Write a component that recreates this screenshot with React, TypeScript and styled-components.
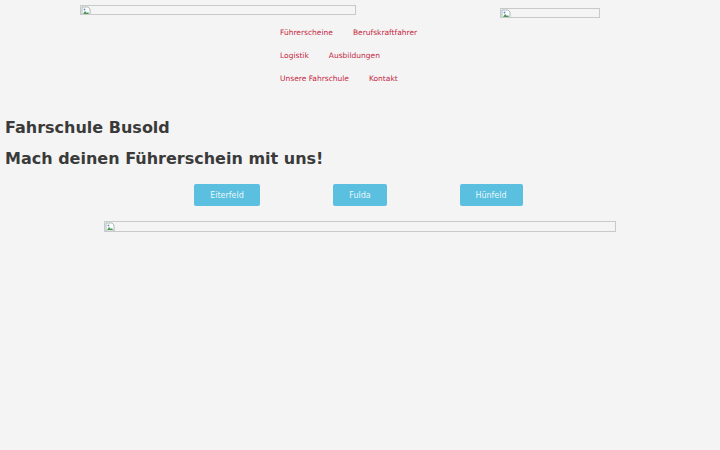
import React from "react";
import styled, { createGlobalStyle } from "styled-components";

const GlobalStyle = createGlobalStyle`
  html, body {
    margin: 0;
    padding: 0;
    background: #f4f4f4;
    font-family: "DejaVu Sans", Verdana, sans-serif;
  }
`;

const Header = styled.header`
  display: grid;
  grid-template-columns: 200px 220px 140px;
  padding-left: 80px;
`;

const LogoCell = styled.div`
  padding-top: 5px;
`;

const SideCell = styled.div`
  padding-top: 8px;
`;

const Placeholder = styled.span<{ w: number; h: number }>`
  display: flex;
  align-items: flex-start;
  box-sizing: border-box;
  width: ${(p) => p.w}px;
  height: ${(p) => p.h}px;
  border: 1px solid #c9c9c9;
  overflow: hidden;
`;

const Nav = styled.nav`
  display: flex;
  flex-wrap: wrap;
  width: 145px;
  column-gap: 20px;
  row-gap: 14px;
  padding-top: 28px;
`;

const NavLink = styled.a`
  font-size: 7.5px;
  line-height: 9px;
  color: #c51f3f;
  text-decoration: none;
  white-space: nowrap;
`;

const Main = styled.main`
  padding: 0 5px;
`;

const Title = styled.h1`
  margin: 35px 0 0;
  font-size: 16px;
  line-height: 20px;
  font-weight: bold;
  color: #3a3a3a;
`;

const Subtitle = styled(Title)`
  margin-top: 11px;
`;

const Locations = styled.div`
  display: flex;
  justify-content: center;
  margin-top: 15px;
`;

const LocationCell = styled.div<{ inset: number }>`
  box-sizing: border-box;
  width: 133px;
  display: flex;
  justify-content: center;
  padding-right: ${(p) => p.inset}px;
`;

const LocationButton = styled.a<{ w: number }>`
  display: flex;
  align-items: center;
  justify-content: center;
  width: ${(p) => p.w}px;
  height: 22px;
  background: #5bbfe0;
  border-radius: 2px;
  color: rgba(255, 255, 255, 0.9);
  font-size: 8px;
  text-decoration: none;
`;

const Banner = styled.div`
  display: flex;
  justify-content: center;
  margin-top: 15px;
`;

function BrokenImage({ w, h }: { w: number; h: number }) {
  return (
    <Placeholder w={w} h={h}>
      <svg width="10" height="10" viewBox="0 0 10 10">
        <path d="M1 1h6l2 2v6H1z" fill="#fff" stroke="#9aa" strokeWidth="0.8" />
        <path d="M2 8l2-3 2 2 1-1 1 2z" fill="#4a9a5a" />
        <circle cx="3.5" cy="3.5" r="0.9" fill="#5a8fd0" />
      </svg>
    </Placeholder>
  );
}

const links = [
  "Führerscheine",
  "Berufskraftfahrer",
  "Logistik",
  "Ausbildungen",
  "Unsere Fahrschule",
  "Kontakt",
];

const locations = [
  { name: "Eiterfeld", w: 66, inset: 0 },
  { name: "Fulda", w: 54, inset: 0 },
  { name: "Hünfeld", w: 63, inset: 4 },
];

export default function App() {
  return (
    <>
      <GlobalStyle />
      <Header>
        <LogoCell>
          <BrokenImage w={276} h={10} />
        </LogoCell>
        <Nav>
          {links.map((l) => (
            <NavLink key={l} href="#">
              {l}
            </NavLink>
          ))}
        </Nav>
        <SideCell>
          <BrokenImage w={100} h={10} />
        </SideCell>
      </Header>
      <Main>
        <Title>Fahrschule Busold</Title>
        <Subtitle>Mach deinen Führerschein mit uns!</Subtitle>
        <Locations>
          {locations.map((loc) => (
            <LocationCell key={loc.name} inset={loc.inset}>
              <LocationButton href="#" w={loc.w}>
                {loc.name}
              </LocationButton>
            </LocationCell>
          ))}
        </Locations>
        <Banner>
          <BrokenImage w={512} h={11} />
        </Banner>
      </Main>
    </>
  );
}
